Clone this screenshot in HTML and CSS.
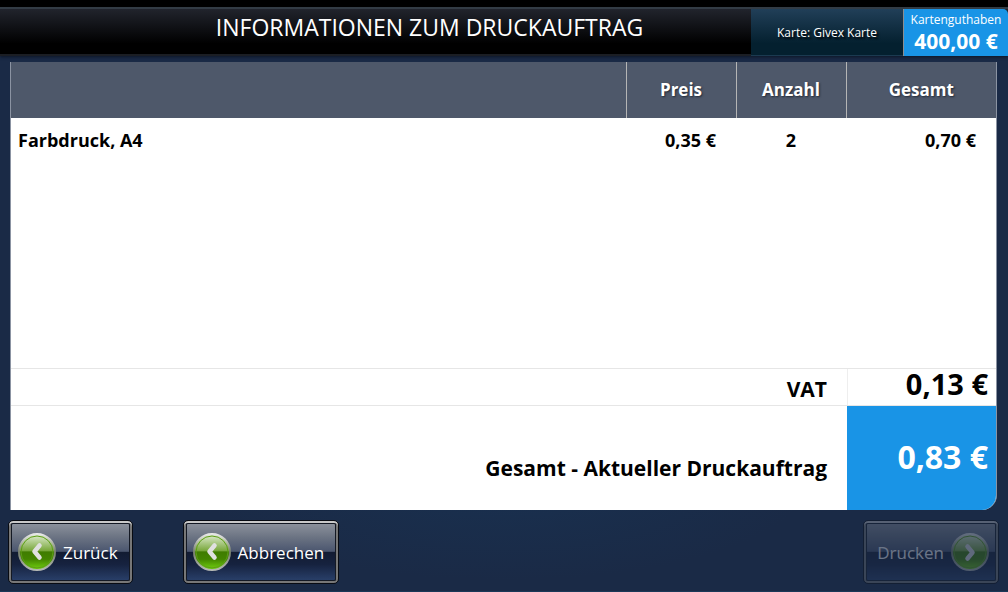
FILE: index.html
```html
<!DOCTYPE html>
<html lang="de">
<head>
  <meta charset="UTF-8">
  <meta name="viewport" content="width=device-width, initial-scale=1">
  <title>Informationen zum Druckauftrag</title>
  <link rel="stylesheet" href="styles.css">
</head>
<body>
  <!-- Farbverläufe für die runden Pfeile -->
  <svg class="defs" width="0" height="0" aria-hidden="true">
    <defs>
      <linearGradient id="kugel" x1="0" y1="0" x2="0" y2="1">
        <stop offset="0" stop-color="#e4efd8"/>
        <stop offset="0.46" stop-color="#79a83c"/>
        <stop offset="0.5" stop-color="#3f7c00"/>
        <stop offset="0.7" stop-color="#438400"/>
        <stop offset="1" stop-color="#74d810"/>
      </linearGradient>
      <linearGradient id="ring" x1="0" y1="0" x2="0" y2="1">
        <stop offset="0" stop-color="#e8e8e8"/>
        <stop offset="0.5" stop-color="#77806c"/>
        <stop offset="1" stop-color="#b4b8b4"/>
      </linearGradient>
    </defs>
  </svg>

  <header class="topbar">
    <h1>INFORMATIONEN ZUM DRUCKAUFTRAG</h1>
    <div class="karte">Karte: Givex Karte</div>
    <div class="guthaben">
      <span>Kartenguthaben</span>
      <strong>400,00 €</strong>
    </div>
  </header>

  <main class="panel">
    <div class="liste">
      <table>
        <thead>
          <tr>
            <th class="artikel"></th>
            <th class="preis">Preis</th>
            <th class="anzahl">Anzahl</th>
            <th class="gesamt">Gesamt</th>
          </tr>
        </thead>
        <tbody>
          <tr>
            <td class="artikel">Farbdruck, A4</td>
            <td class="preis">0,35 €</td>
            <td class="anzahl">2</td>
            <td class="gesamt">0,70 €</td>
          </tr>
        </tbody>
      </table>
    </div>

    <div class="summe">
      <div class="label">VAT</div>
      <div class="betrag">0,13 €</div>
    </div>
    <div class="summe total">
      <div class="label">Gesamt - Aktueller Druckauftrag</div>
      <div class="betrag">0,83 €</div>
    </div>
  </main>

  <footer class="buttons">
    <button type="button">
      <svg class="pfeil" viewBox="0 0 40 40" aria-hidden="true">
        <circle cx="20" cy="20" r="18" fill="url(#kugel)" stroke="url(#ring)" stroke-width="2"/>
        <circle cx="20" cy="20" r="16" fill="none" stroke="#5d9c18" stroke-width="1"/>
        <path d="M22.5 13.5l-5 6 5 6" fill="none" stroke="#e0e0e0" stroke-width="4.5" stroke-linecap="round" stroke-linejoin="round"/>
      </svg>
      <span>Zurück</span>
    </button>
    <button type="button">
      <svg class="pfeil" viewBox="0 0 40 40" aria-hidden="true">
        <circle cx="20" cy="20" r="18" fill="url(#kugel)" stroke="url(#ring)" stroke-width="2"/>
        <circle cx="20" cy="20" r="16" fill="none" stroke="#5d9c18" stroke-width="1"/>
        <path d="M22.5 13.5l-5 6 5 6" fill="none" stroke="#e0e0e0" stroke-width="4.5" stroke-linecap="round" stroke-linejoin="round"/>
      </svg>
      <span>Abbrechen</span>
    </button>
    <button type="button" class="drucken" disabled>
      <span>Drucken</span>
      <svg class="pfeil" viewBox="0 0 40 40" aria-hidden="true">
        <circle cx="20" cy="20" r="18" fill="url(#kugel)" stroke="url(#ring)" stroke-width="2"/>
        <circle cx="20" cy="20" r="16" fill="none" stroke="#5d9c18" stroke-width="1"/>
        <path d="M17.5 14.5l5 6-5 6" fill="none" stroke="#e0e0e0" stroke-width="4.5" stroke-linecap="round" stroke-linejoin="round"/>
      </svg>
    </button>
  </footer>
</body>
</html>
```
FILE: styles.css
```css
* {
  box-sizing: border-box;
}

body {
  margin: 0;
  min-height: 100vh;
  display: flex;
  flex-direction: column;
  font-family: 'Open Sans', 'Noto Sans', sans-serif;
  background: radial-gradient(ellipse 30% 16% at 50% 82%, #19304f, #1a2a46);
  border-bottom: 1px solid #1b3858;
}

.defs {
  position: absolute;
}

/* Kopfzeile */
.topbar {
  display: flex;
  height: 56px;
  border-top: 7px solid #000;
  background: linear-gradient(#23262f, #000 75%);
  box-shadow: inset 0 2px 0 #333c45, inset 0 -2px 0 #1b1e24, 0 1px 3px #0d1526;
}

.topbar h1 {
  flex: 1;
  margin: 0;
  padding-left: 108px;
  font-size: 23px;
  line-height: 41px;
  font-weight: 400;
  text-align: center;
  color: #fff;
}

.karte {
  width: 152px;
  margin-top: 2px;
  border-bottom: 1px solid #1b3a50;
  background: linear-gradient(#213f58, #04202f 75%);
  font-size: 12px;
  line-height: 48px;
  text-align: center;
  color: #fff;
  text-shadow: 2px 2px 2px #000;
}

.guthaben {
  width: 105px;
  margin-top: 2px;
  border-left: 1px solid #8d8d8d;
  border-top-right-radius: 5px;
  background: #1994e6;
  color: #fff;
  text-align: center;
}

.guthaben span,
.guthaben strong {
  display: block;
}

.guthaben span {
  font-size: 12px;
  line-height: 21px;
}

.guthaben strong {
  font-size: 21px;
  line-height: 22px;
}

/* Tabelle */
.panel {
  flex: 1;
  display: flex;
  flex-direction: column;
  margin: 6px 11px 0 10px;
  border: solid #8b93a2;
  border-width: 0 1px;
  border-bottom-right-radius: 15px;
  background: #fff;
  overflow: hidden;
}

.liste {
  flex: 1;
}

table {
  width: 100%;
  table-layout: fixed;
  border-collapse: collapse;
  font-size: 17px;
}

th {
  height: 56px;
  padding: 0 0 2px;
  border-left: 1px solid #b5b5b5;
  background: #4e586a;
  color: #fff;
  text-shadow: 1px 1px 2px #222a38;
}

th:first-child {
  border-left: none;
}

td {
  height: 44px;
  padding: 0 20px 0 7px;
  font-size: 18px;
  font-weight: 700;
}

.preis,
.anzahl {
  width: 110px;
}

.gesamt {
  width: 150px;
}

td.preis,
td.gesamt {
  text-align: right;
}

td.anzahl {
  padding: 0;
  text-align: center;
}

/* Summen */
.summe {
  display: flex;
  height: 37px;
  border-top: 1px solid #e6e6e6;
  font-weight: 700;
}

.summe .label {
  flex: 1;
  padding-right: 20px;
  font-size: 21px;
  line-height: 40px;
  text-align: right;
}

.summe .betrag {
  width: 149px;
  padding-right: 8px;
  border-left: 1px solid #eee;
  font-size: 29px;
  line-height: 30px;
  text-align: right;
}

.total {
  height: 105px;
}

.total .label {
  line-height: 124px;
}

.total .betrag {
  border-left-color: #1994e6;
  background: #1994e6;
  color: #fff;
  font-size: 32px;
  line-height: 102px;
}

/* Buttons unten */
.buttons {
  display: flex;
  gap: 50px;
  padding: 10px 9px 7px 8px;
}

button {
  display: flex;
  align-items: center;
  gap: 6px;
  height: 64px;
  padding: 0 14px 0 8px;
  border: 1px solid #080b12;
  border-radius: 5px;
  background: linear-gradient(#9297a1, #6d7584 25%, #4b566f 49%, #121b32 50%, #16223f 70%, #2c4470);
  box-shadow: inset 0 2px 0 #c9c9c9, inset 0 -2px 0 #777, inset 2px 0 0 #777, inset -2px 0 0 #777,
    inset 0 0 0 3px #141924;
  color: #fff;
  font-family: inherit;
  font-size: 17px;
  cursor: pointer;
}

button:disabled {
  opacity: 0.35;
  cursor: default;
}

.pfeil {
  width: 40px;
  height: 40px;
}

.drucken {
  margin-left: auto;
  padding: 0 8px 0 13px;
}
```
